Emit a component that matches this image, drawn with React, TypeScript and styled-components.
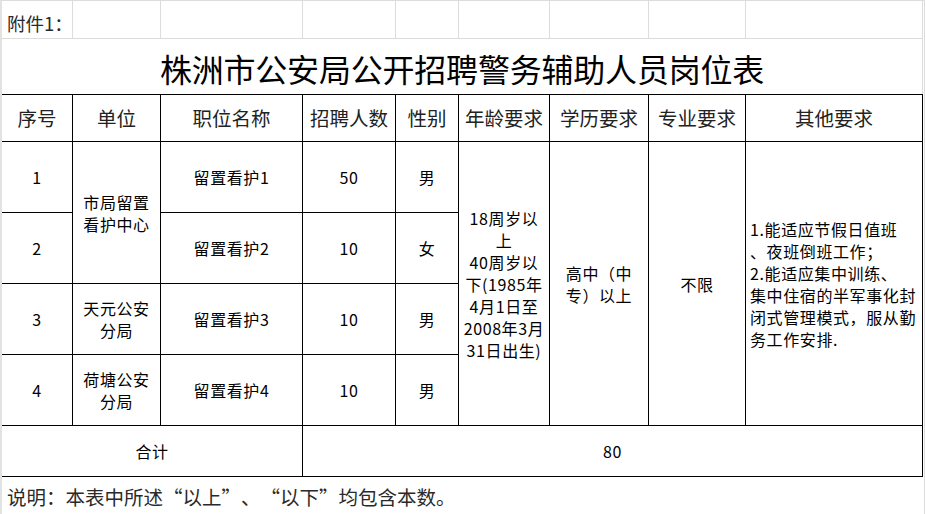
import React from "react";
import styled, { createGlobalStyle } from "styled-components";

const GlobalStyle = createGlobalStyle`
  html, body {
    margin: 0;
    padding: 0;
    background: #ffffff;
  }
`;

const COLS = "71px 88px 142px 93px 63px 91px 99px 97px 177px";
const GRID_GRAY = "#dcdcdc";

interface CellProps {
  $rows?: number;
  $cols?: number;
  $align?: "left" | "center";
  $head?: boolean;
}

const Sheet = styled.div`
  width: 925px;
  height: 514px;
  box-sizing: border-box;
  border-left: 2px solid #e2e2e2;
  border-top: 1px solid ${GRID_GRAY};
  border-right: 1px solid ${GRID_GRAY};
  overflow: hidden;
  background: #fff;
  font-family: "Noto Sans CJK SC", "Noto Sans", sans-serif;
  color: #000;
`;

const PlainRow = styled.div`
  display: grid;
  grid-template-columns: ${COLS};
  height: 38px;
`;

const PlainCell = styled.div`
  box-sizing: border-box;
  border-right: 1px solid ${GRID_GRAY};
  border-bottom: 1px solid ${GRID_GRAY};
  display: flex;
  align-items: center;
  padding-top: 6px;
  padding-left: 5px;
  white-space: nowrap;
  overflow: visible;
  font-size: 18.5px;
  color: #2a2a2a;
`;

const TitleRow = styled.div`
  width: 921px;
  height: 55px;
  box-sizing: border-box;
  border-right: 1px solid ${GRID_GRAY};
  display: flex;
  align-items: center;
  justify-content: center;
  padding-top: 2px;
  font-size: 32px;
  font-weight: 400;
  letter-spacing: -0.2px;
`;

const Table = styled.div`
  width: 921px;
  display: grid;
  grid-template-columns: ${COLS};
  grid-template-rows: 47px 71px 71px 71px 71px 51px;
  border-top: 1px solid #000;
`;

const Cell = styled.div<CellProps>`
  box-sizing: border-box;
  grid-row: span ${(p) => p.$rows || 1};
  grid-column: span ${(p) => p.$cols || 1};
  border-right: 1px solid #000;
  border-bottom: 1px solid #000;
  display: flex;
  flex-direction: column;
  justify-content: center;
  align-items: ${(p) => (p.$align === "left" ? "flex-start" : "center")};
  padding-left: ${(p) => (p.$align === "left" ? "4px" : "0")};
  font-size: ${(p) => (p.$head ? "19.5px" : "16px")};
  color: ${(p) => (p.$head ? "#222" : "#000")};
  line-height: 22px;
  letter-spacing: ${(p) => (p.$head ? "0" : "0.6px")};
  white-space: nowrap;
`;

const Line = styled.span`
  display: block;
`;

const NoteRow = styled.div`
  height: 38px;
  display: flex;
  align-items: center;
  padding-left: 5px;
  font-size: 19.5px;
  color: #2a2a2a;
  white-space: nowrap;
`;

// full-width quote box, as the Song font in the original sheet draws them
const Quote = styled.span<{ $open?: boolean }>`
  display: inline-block;
  width: 1em;
  text-align: ${(p) => (p.$open ? "right" : "left")};
`;

const headers = [
  "序号",
  "单位",
  "职位名称",
  "招聘人数",
  "性别",
  "年龄要求",
  "学历要求",
  "专业要求",
  "其他要求",
];

const Multi: React.FC<{ lines: string[] }> = ({ lines }) => (
  <>
    {lines.map((l, i) => (
      <Line key={i}>{l}</Line>
    ))}
  </>
);

const App: React.FC = () => {
  return (
    <>
      <GlobalStyle />
      <Sheet lang="zh-CN">
        <PlainRow>
          <PlainCell>附件1：</PlainCell>
          {Array.from({ length: 8 }).map((_, i) => (
            <PlainCell key={i} />
          ))}
        </PlainRow>
        <TitleRow>株洲市公安局公开招聘警务辅助人员岗位表</TitleRow>
        <Table>
          {headers.map((h) => (
            <Cell key={h} $head>
              {h}
            </Cell>
          ))}

          <Cell>1</Cell>
          <Cell $rows={2}>
            <Multi lines={["市局留置", "看护中心"]} />
          </Cell>
          <Cell>留置看护1</Cell>
          <Cell>50</Cell>
          <Cell>男</Cell>
          <Cell $rows={4}>
            <Multi
              lines={[
                "18周岁以",
                "上",
                "40周岁以",
                "下(1985年",
                "4月1日至",
                "2008年3月",
                "31日出生)",
              ]}
            />
          </Cell>
          <Cell $rows={4}>
            <Multi lines={["高中（中", "专）以上"]} />
          </Cell>
          <Cell $rows={4}>不限</Cell>
          <Cell $rows={4} $align="left">
            <Multi
              lines={[
                "1.能适应节假日值班",
                "、夜班倒班工作；",
                "2.能适应集中训练、",
                "集中住宿的半军事化封",
                "闭式管理模式，服从勤",
                "务工作安排.",
              ]}
            />
          </Cell>

          <Cell>2</Cell>
          <Cell>留置看护2</Cell>
          <Cell>10</Cell>
          <Cell>女</Cell>

          <Cell>3</Cell>
          <Cell>
            <Multi lines={["天元公安", "分局"]} />
          </Cell>
          <Cell>留置看护3</Cell>
          <Cell>10</Cell>
          <Cell>男</Cell>

          <Cell>4</Cell>
          <Cell>
            <Multi lines={["荷塘公安", "分局"]} />
          </Cell>
          <Cell>留置看护4</Cell>
          <Cell>10</Cell>
          <Cell>男</Cell>

          <Cell $cols={3}>合计</Cell>
          <Cell $cols={6}>80</Cell>
        </Table>
        <NoteRow>
          说明：本表中所述<Quote $open>“</Quote>以上<Quote>”</Quote>、
          <Quote $open>“</Quote>以下<Quote>”</Quote>均包含本数。
        </NoteRow>
      </Sheet>
    </>
  );
};

export default App;
